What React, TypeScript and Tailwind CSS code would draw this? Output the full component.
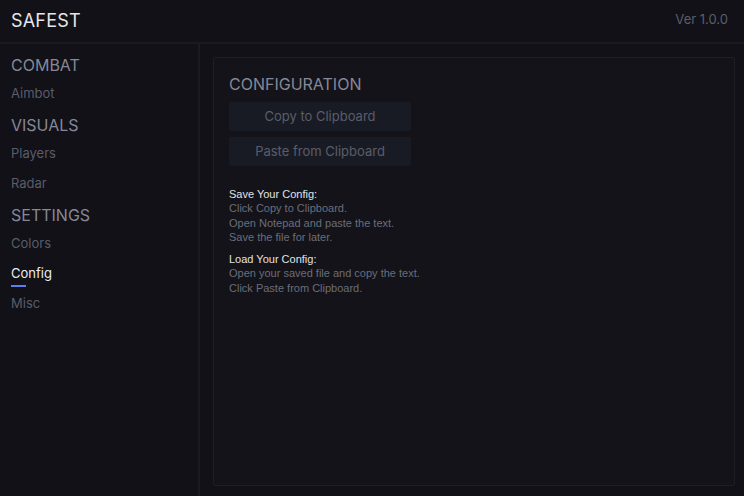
const NAV = [
  { title: "COMBAT", items: ["Aimbot"] },
  { title: "VISUALS", items: ["Players", "Radar"] },
  { title: "SETTINGS", items: ["Colors", "Config", "Misc"] },
];

const ACTIVE = "Config";

export default function App() {
  return (
    <div
      className="flex h-[496px] w-[744px] flex-col overflow-hidden bg-[#111117] text-white"
      style={{ fontFamily: "Inter, 'Liberation Sans', sans-serif" }}
    >
      <header className="flex h-[44px] shrink-0 items-center justify-between border-b-2 border-[#1a1a22] px-[11px] pb-[2px]">
        <div className="text-[18px] tracking-[0.2px] text-[#e6e6ea]">SAFEST</div>
        <div className="pr-[5px] text-[13px] text-[#5c5e6b]">Ver 1.0.0</div>
      </header>

      <div className="flex min-h-0 flex-1">
        <aside className="w-[200px] shrink-0 border-r-2 border-[#1a1a22] px-[11px] pt-[7px]">
          {NAV.map((group, gi) => (
            <div key={group.title} className={gi > 0 ? "mt-[2px]" : ""}>
              <div className="flex h-[28px] items-center text-[16px] text-[#858897]">
                {group.title}
              </div>
              {group.items.map((item) => (
                <div key={item} className="flex h-[30px] flex-col justify-center">
                  <div
                    className={
                      item === ACTIVE
                        ? "relative text-[13px] text-[#ececf0]"
                        : "text-[13px] text-[#5a5c69]"
                    }
                  >
                    {item}
                    {item === ACTIVE && (
                      <div className="absolute left-0 top-[21px] h-[2px] w-[15px] bg-[#5b7ff0]" />
                    )}
                  </div>
                </div>
              ))}
            </div>
          ))}
        </aside>

        <main className="min-w-0 flex-1 pb-[10px] pl-[13px] pr-[9px] pt-[13px]">
          <section className="h-full rounded-[2px] border border-[#1e1e27] bg-[#131319] px-[15px] pt-[15px]">
            <h2 className="text-[16px] leading-[22px] text-[#858897]">CONFIGURATION</h2>
            <div className="mt-[7px] flex w-[182px] flex-col gap-[6px]">
              <button className="h-[29px] rounded-[2px] bg-[#191b24] text-[13px] text-[#5a5d6b]">
                Copy to Clipboard
              </button>
              <button className="h-[29px] rounded-[2px] bg-[#191b24] text-[13px] text-[#5a5d6b]">
                Paste from Clipboard
              </button>
            </div>

            <div
              className="mt-[21px] text-[11px] leading-[14.3px]"
              style={{ fontFamily: "'Liberation Sans', Arial, sans-serif" }}
            >
              <div className="text-[#e2e2e6]">Save Your Config:</div>
              <div className="text-[#6b6d79]">Click Copy to Clipboard.</div>
              <div className="text-[#6b6d79]">Open Notepad and paste the text.</div>
              <div className="text-[#6b6d79]">Save the file for later.</div>
              <div className="mt-[8px] text-[#e2e2e6]">Load Your Config:</div>
              <div className="text-[#6b6d79]">Open your saved file and copy the text.</div>
              <div className="text-[#6b6d79]">Click Paste from Clipboard.</div>
            </div>
          </section>
        </main>
      </div>
    </div>
  );
}
